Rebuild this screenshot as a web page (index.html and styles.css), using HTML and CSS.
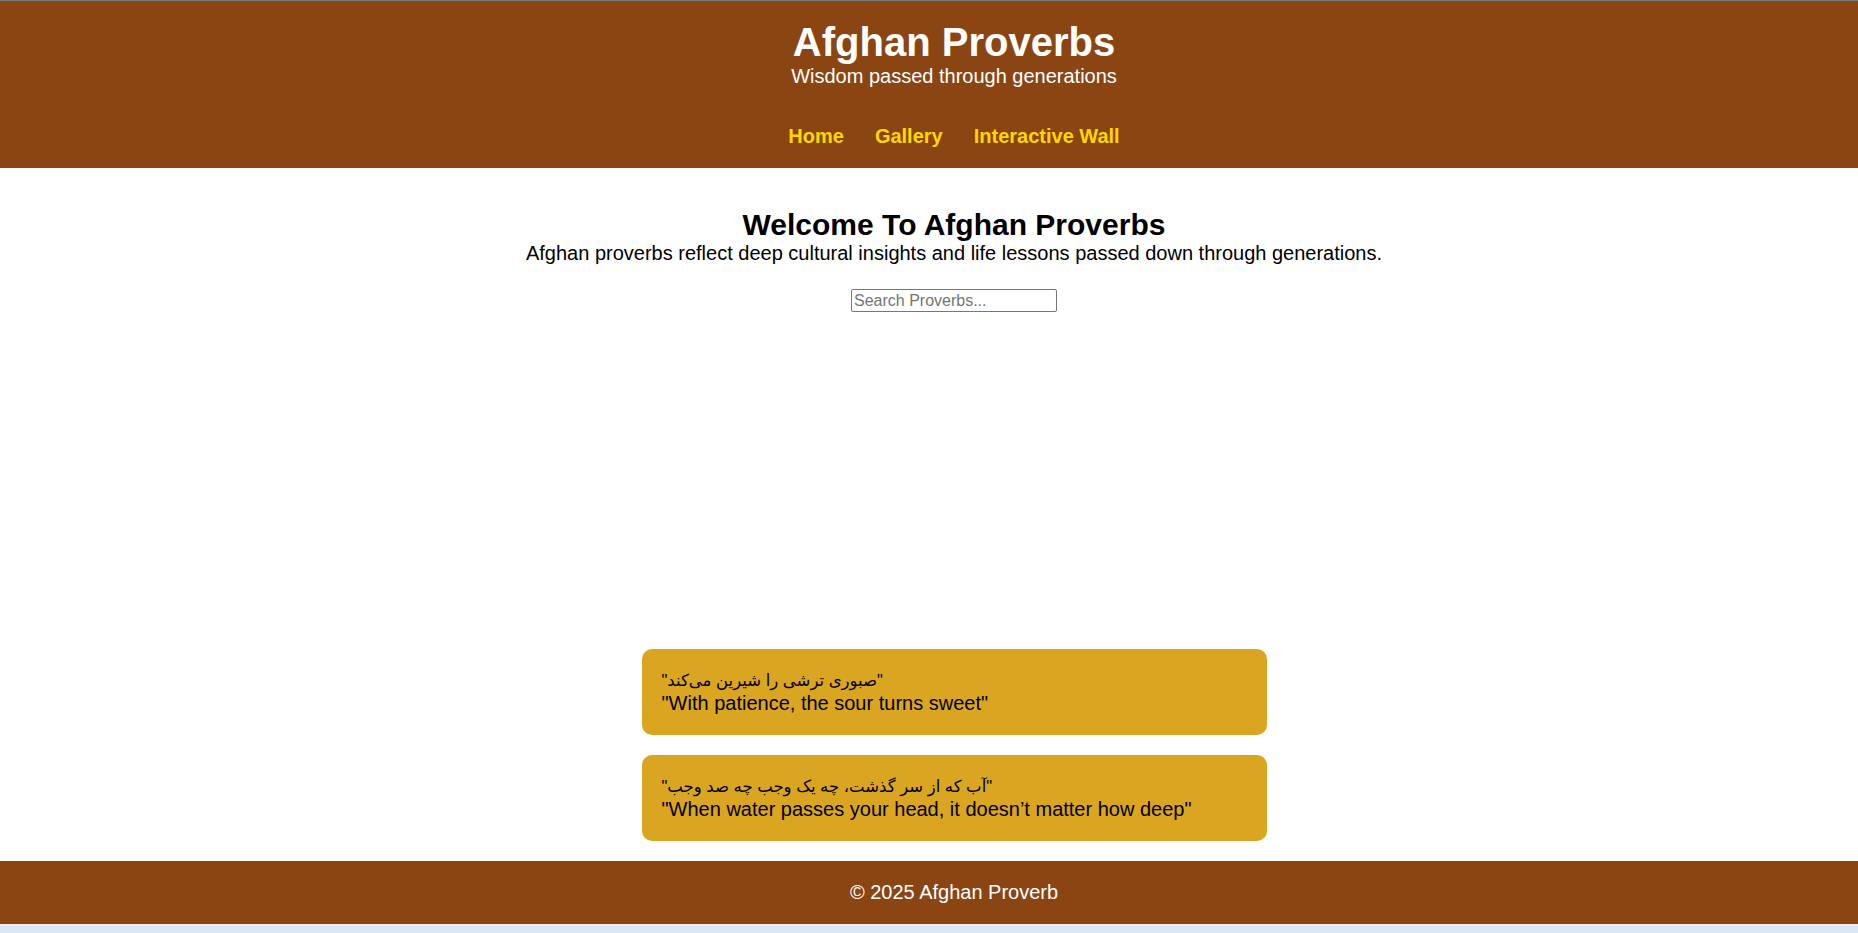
FILE: index.html
```html
<!DOCTYPE html>
<html lang="en">
<head>
<meta charset="utf-8">
<title>Afghan Proverbs</title>
<link rel="stylesheet" href="styles.css">
</head>
<body>
<header class="site-header">
  <h1 class="site-title">Afghan Proverbs</h1>
  <p class="site-tagline">Wisdom passed through generations</p>
  <nav class="site-nav">
    <a href="#" class="nav-link">Home</a>
    <a href="#" class="nav-link">Gallery</a>
    <a href="#" class="nav-link">Interactive Wall</a>
  </nav>
</header>
<main class="content">
  <h2 class="welcome-title">Welcome To Afghan Proverbs</h2>
  <p class="welcome-text">Afghan proverbs reflect deep cultural insights and life lessons passed down through generations.</p>
  <input class="search" type="text" placeholder="Search Proverbs...">
  <div class="proverbs">
    <div class="proverb">
      <div class="proverb-fa">"صبوری ترشی را شیرین می‌کند"</div>
      <div class="proverb-en">"With patience, the sour turns sweet"</div>
    </div>
    <div class="proverb">
      <div class="proverb-fa">"آب که از سر گذشت، چه یک وجب چه صد وجب"</div>
      <div class="proverb-en">"When water passes your head, it doesn’t matter how deep"</div>
    </div>
  </div>
</main>
<footer class="site-footer">© 2025 Afghan Proverb</footer>
</body>
</html>
```

FILE: styles.css
```css
html {
  background: #dce7f6;
}
body {
  margin: 0;
  background: #ffffff;
  font-family: "Liberation Sans", Arial, "DejaVu Sans", sans-serif;
  color: #000;
  border-bottom: 2px solid #ececec;
}
.site-header {
  background: #8b4513;
  border-top: 1px solid #7a7a7a;
  padding: 18px 0 20px 50px;
  text-align: center;
  color: #fff;
}
.site-title {
  margin: 0;
  font-size: 40px;
  font-weight: bold;
  line-height: 46px;
}
.site-tagline {
  margin: 0;
  font-size: 20px;
  line-height: 23px;
}
.site-nav {
  margin-top: 37px;
  display: flex;
  justify-content: center;
  gap: 31px;
}
.nav-link {
  color: #ffd700;
  font-weight: bold;
  font-size: 20px;
  line-height: 23px;
  text-decoration: none;
}
.content {
  padding: 39px 0 20px 50px;
  text-align: center;
}
.welcome-title {
  margin: 0;
  font-size: 30px;
  line-height: 35px;
  font-weight: bold;
}
.welcome-text {
  margin: 0;
  font-size: 20px;
  line-height: 23px;
}
.search {
  margin-top: 24px;
  width: 200px;
  height: 19px;
  padding: 1px 2px;
  border: 1px solid #767676;
  border-radius: 2px;
  font-family: "Liberation Sans", Arial, sans-serif;
  font-size: 16px;
  box-sizing: content-box;
}
.search::placeholder {
  color: #757575;
}
.proverbs {
  margin-top: 337px;
  display: flex;
  flex-direction: column;
  align-items: center;
  gap: 20px;
}
.proverb {
  width: 585px;
  padding: 20px;
  background: #daa520;
  border-radius: 10px;
  text-align: left;
  font-size: 20px;
  line-height: 23px;
}
.proverb-fa {
  font-family: "Liberation Sans", "DejaVu Sans", sans-serif;
  font-size: 16.5px;
  height: 23px;
}
.site-footer {
  background: #8b4513;
  color: #fff;
  text-align: center;
  padding: 20px 0 20px 50px;
  font-size: 20px;
  line-height: 23px;
}
```
